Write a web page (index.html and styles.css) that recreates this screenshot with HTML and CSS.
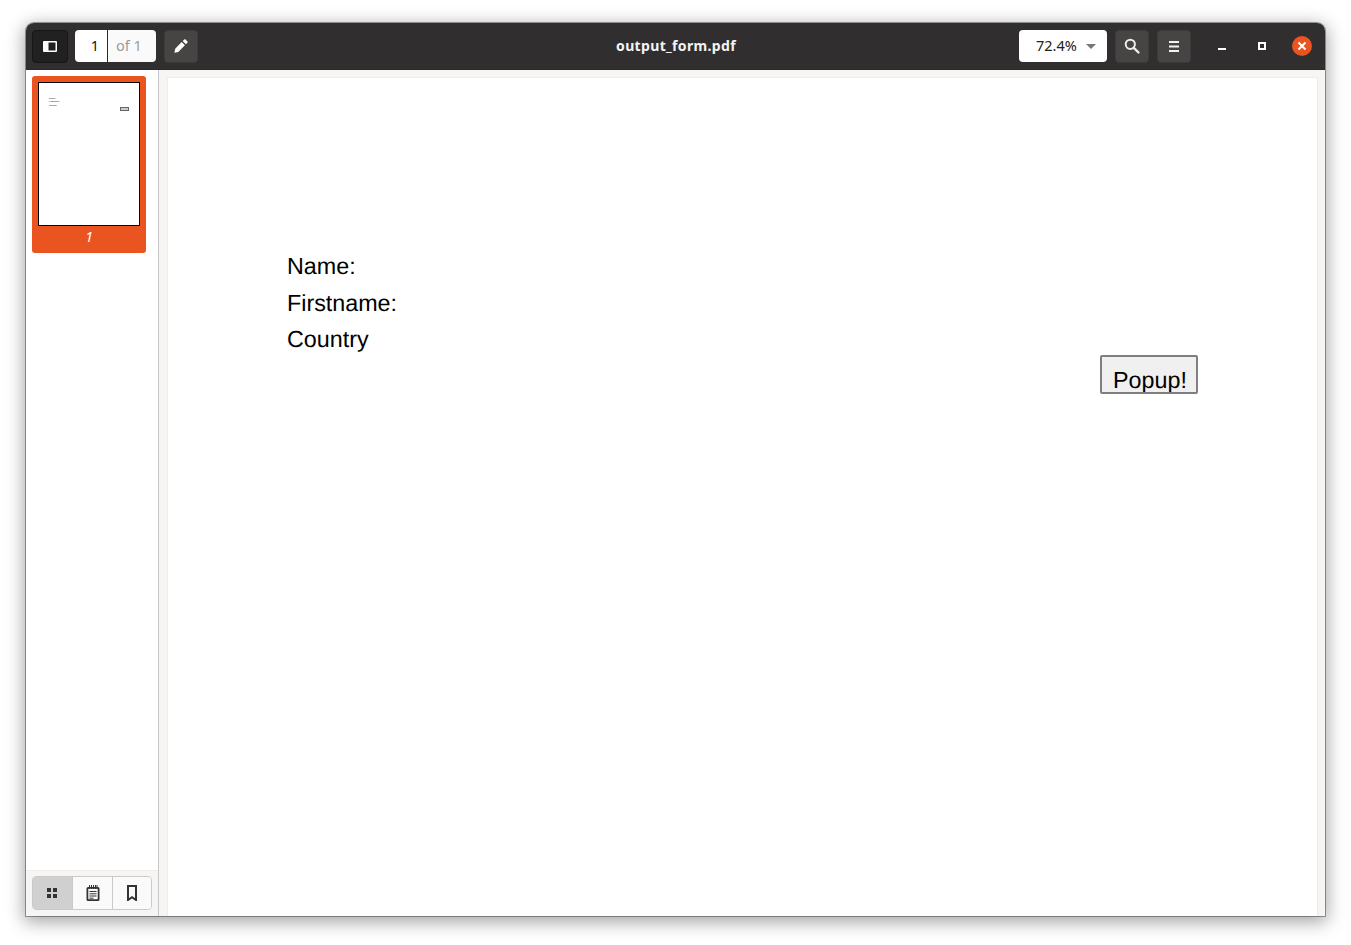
FILE: index.html
```html
<!DOCTYPE html>
<html lang="en">
<head>
<meta charset="utf-8">
<title>output_form.pdf</title>
<link rel="stylesheet" href="styles.css">
</head>
<body>
<div class="window">
  <header class="headerbar">
    <div class="bar-left">
      <button class="hb-btn toggled" aria-label="Side pane">
        <svg width="14" height="11" viewBox="0 0 14 11"><path fill="#fff" fill-rule="evenodd" d="M1 0h12a1 1 0 0 1 1 1v9a1 1 0 0 1-1 1H1a1 1 0 0 1-1-1V1a1 1 0 0 1 1-1zm4.500 1.500v8h7v-8z"/></svg>
      </button>
      <div class="page-entry">
        <span class="page-current">1</span>
        <span class="page-total">of 1</span>
      </div>
      <button class="hb-btn edit" aria-label="Annotate">
        <svg width="14" height="14" viewBox="0 0 14 14"><path fill="#fff" d="M10.2.6a1 1 0 0 1 1.4 0l1.800 1.800a1 1 0 0 1 0 1.400l-1.500 1.500-3.200-3.200zM7.700 3.100l3.200 3.200-6.600 6.600-3.900.9.800-4z"/></svg>
      </button>
    </div>
    <div class="title">output_form.pdf</div>
    <div class="bar-right">
      <div class="zoom-entry">
        <span class="zoom-value">72.4%</span>
        <span class="zoom-arrow"></span>
      </div>
      <button class="hb-btn search" aria-label="Search">
        <svg width="16" height="16" viewBox="0 0 16 16"><circle cx="6.300" cy="6.300" r="4.600" fill="none" stroke="#ececec" stroke-width="2"/><path d="M9.800 9.800l4.700 4.700" stroke="#ececec" stroke-width="2.400" stroke-linecap="round"/></svg>
      </button>
      <button class="hb-btn menu" aria-label="Menu">
        <svg width="12" height="11" viewBox="0 0 12 11"><path fill="#f2f2f2" d="M1 0h10v2H1zM1 4.500h10v2H1zM1 9h10v2H1z"/></svg>
      </button>
      <div class="wm">
        <span class="wm-btn"><svg width="10" height="10" viewBox="0 0 10 10"><path fill="#fff" d="M1 7h8v2H1z"/></svg></span>
        <span class="wm-btn"><svg width="10" height="10" viewBox="0 0 10 10"><path fill="#fff" fill-rule="evenodd" d="M1 1h8v8H1zm2 2v4h4V3z"/></svg></span>
        <span class="wm-btn"><span class="close"><svg width="10" height="10" viewBox="0 0 10 10"><path d="M1.500 1.500l7 7M8.500 1.500l-7 7" stroke="#fff" stroke-width="2"/></svg></span></span>
      </div>
    </div>
  </header>
  <div class="body-row">
    <aside class="sidebar">
      <div class="thumb-list">
        <div class="thumb-item">
          <div class="thumb-page">
            <div class="thumb-lines">
              <div>Name:</div>
              <div>Firstname:</div>
              <div>Country</div>
            </div>
            <div class="thumb-popup"></div>
          </div>
          <div class="thumb-label">1</div>
        </div>
      </div>
      <div class="switcher-bar">
        <div class="switcher">
          <button class="sw-btn active" aria-label="Thumbnails">
            <svg width="10" height="10" viewBox="0 0 10 10"><path fill="#333" d="M0 0h4v4H0zM6 0h4v4H6zM0 6h4v4H0zM6 6h4v4H6z"/></svg>
          </button>
          <button class="sw-btn" aria-label="Annotations">
            <svg width="14" height="16" viewBox="0 0 14 16"><path fill="none" stroke="#333" stroke-width="1.800" d="M2 2.900h10a.6.6 0 0 1 .6.6v11a.6.6 0 0 1-.6.6H2a.6.6 0 0 1-.6-.6v-11a.6.6 0 0 1 .6-.6z"/><path stroke="#333" stroke-width="1" d="M3.500 0v4M5.500 0v4M7.500 0v4M9.500 0v4M11 0v4M3.500 6.500h7M3.500 8.800h7M3.500 11h7M3.500 13.200h4"/></svg>
          </button>
          <button class="sw-btn" aria-label="Bookmarks">
            <svg width="10" height="16" viewBox="0 0 10 16"><path fill="none" stroke="#333" stroke-width="2" d="M1 15V1h8v14l-4-2.800z"/></svg>
          </button>
        </div>
      </div>
    </aside>
    <main class="viewer">
      <div class="page">
        <div class="form-lines">
          <div class="form-line">Name:</div>
          <div class="form-line">Firstname:</div>
          <div class="form-line">Country</div>
        </div>
        <div class="popup-row">
          <div class="popup">Popup!</div>
        </div>
      </div>
    </main>
  </div>
</div>
</body>
</html>
```
FILE: styles.css
```css
* { box-sizing: border-box; }
html, body { height: 100%; }
body {
  margin: 0;
  padding: 23px 26px 29px;
  background: #fff;
  overflow: hidden;
  font-family: "Noto Sans", sans-serif;
}
button { padding: 0; margin: 0; font: inherit; cursor: default; }
.window {
  width: 1299px;
  height: 893px;
  display: flex;
  flex-direction: column;
  border-radius: 8px 8px 0 0;
  overflow: hidden;
  box-shadow: 0 0 0 1px rgba(0,0,0,.35), 0 4px 18px 2px rgba(0,0,0,.36);
}
.headerbar {
  flex: 0 0 47px;
  display: grid;
  grid-template-columns: 1fr auto 1fr;
  align-items: center;
  background: #302e2e;
  border-bottom: 1px solid #2b2929;
  padding: 0 3px 0 6px;
}
.bar-left, .bar-right { display: flex; align-items: center; }
.bar-right { justify-content: flex-end; }
.title {
  color: #f4f4f4;
  font-size: 14px;
  font-weight: 700;
  letter-spacing: .33px;
  padding: 0 2px 2px 0;
  text-align: center;
  white-space: nowrap;
}
.hb-btn {
  width: 34px;
  height: 33px;
  display: flex;
  align-items: center;
  justify-content: center;
  background: #474544;
  border: 1px solid #3e3c3b;
  border-radius: 4px;
}
.hb-btn svg { display: block; }
.toggled {
  width: 36px;
  margin-right: 7px;
  background: #222121;
  border-color: #171616;
}
.edit { margin-left: 8px; }
.page-entry {
  width: 81px;
  height: 32px;
  display: flex;
  border-radius: 4px;
  overflow: hidden;
  font-size: 14.500px;
}
.page-current {
  width: 33px;
  display: flex;
  align-items: center;
  justify-content: flex-end;
  padding: 0 8px 2px 0;
  background: #fff;
  border-right: 1px solid #2c2a2a;
  color: #111;
}
.page-total {
  flex: 1;
  display: flex;
  align-items: center;
  padding: 0 0 2px 8px;
  background: #fafafa;
  color: #9a9a9a;
}
.zoom-entry {
  width: 88px;
  height: 32px;
  display: flex;
  align-items: center;
  justify-content: space-between;
  padding: 0 11px 2px 17px;
  background: #fff;
  border-radius: 4px;
  color: #222;
  font-size: 14.500px;
  margin-right: 8px;
}
.zoom-arrow {
  width: 0;
  height: 0;
  margin-top: 2px;
  border-left: 5px solid transparent;
  border-right: 5px solid transparent;
  border-top: 5px solid #777;
}
.search { margin-right: 8px; }
.wm { display: flex; margin-left: 11px; }
.wm-btn {
  width: 40px;
  height: 33px;
  display: flex;
  align-items: center;
  justify-content: center;
}
.wm-btn svg { display: block; }
.close {
  width: 20px;
  height: 20px;
  display: flex;
  align-items: center;
  justify-content: center;
  border-radius: 50%;
  background: #e95420;
}
.body-row { flex: 1; display: flex; min-height: 0; }
.sidebar {
  width: 133px;
  display: flex;
  flex-direction: column;
  background: #fff;
  border-right: 1px solid #c8c8c8;
}
.thumb-list { flex: 1; padding: 6px; }
.thumb-item {
  width: 114px;
  height: 177px;
  padding: 6px;
  background: #e95420;
  border-radius: 3px;
}
.thumb-page {
  height: 144px;
  display: flex;
  align-items: flex-start;
  justify-content: space-between;
  padding: 14px 10px 0;
  background: #fff;
  border: 1px solid #000;
}
.thumb-lines {
  font-family: "Liberation Sans", sans-serif;
  font-size: 2.300px;
  line-height: 3.400px;
  color: #000;
}
.thumb-popup {
  width: 9px;
  height: 4px;
  margin-top: 10px;
  background: #ccc;
  border: 1px solid #666;
}
.thumb-label {
  height: 21px;
  display: flex;
  align-items: center;
  justify-content: center;
  color: #fff;
  font-size: 14px;
  font-style: italic;
}
.switcher-bar {
  flex: 0 0 46px;
  padding: 5px 6px 0;
  background: #f6f5f4;
  border-top: 1px solid #efeeed;
}
.switcher {
  width: 120px;
  height: 34px;
  display: flex;
  border: 1px solid #cdc9c6;
  border-radius: 4px;
  overflow: hidden;
  background: #fafafa;
}
.sw-btn {
  flex: 0 0 40px;
  display: flex;
  align-items: center;
  justify-content: center;
  background: #fafafa;
  border: 0;
  border-right: 1px solid #cdc9c6;
}
.sw-btn:last-child { flex: 1; border-right: 0; }
.sw-btn.active { padding-right: 2px; background: #d0d0d0; }
.viewer {
  flex: 1;
  min-width: 0;
  padding: 8px 8px 0 9px;
  background: #f6f5f4;
}
.page {
  height: 100%;
  background: #fff;
  box-shadow: 0 0 0 1px #eeeded;
  padding: 170px 119px 0;
  font-family: "Liberation Sans", sans-serif;
  color: #000;
  text-rendering: geometricPrecision;
}
.form-line {
  height: 36.500px;
  font-size: 23.300px;
  line-height: 36.500px;
}
.popup-row { display: flex; justify-content: flex-end; margin-top: -3px; }
.popup {
  width: 98px;
  height: 39px;
  padding: 8px 0 0 2px;
  text-align: center;
  background: #f0f0f0;
  border: 2px solid #7f7f7f;
  border-radius: 2px;
  font-size: 23.300px;
  line-height: 30px;
  overflow: hidden;
}
```
